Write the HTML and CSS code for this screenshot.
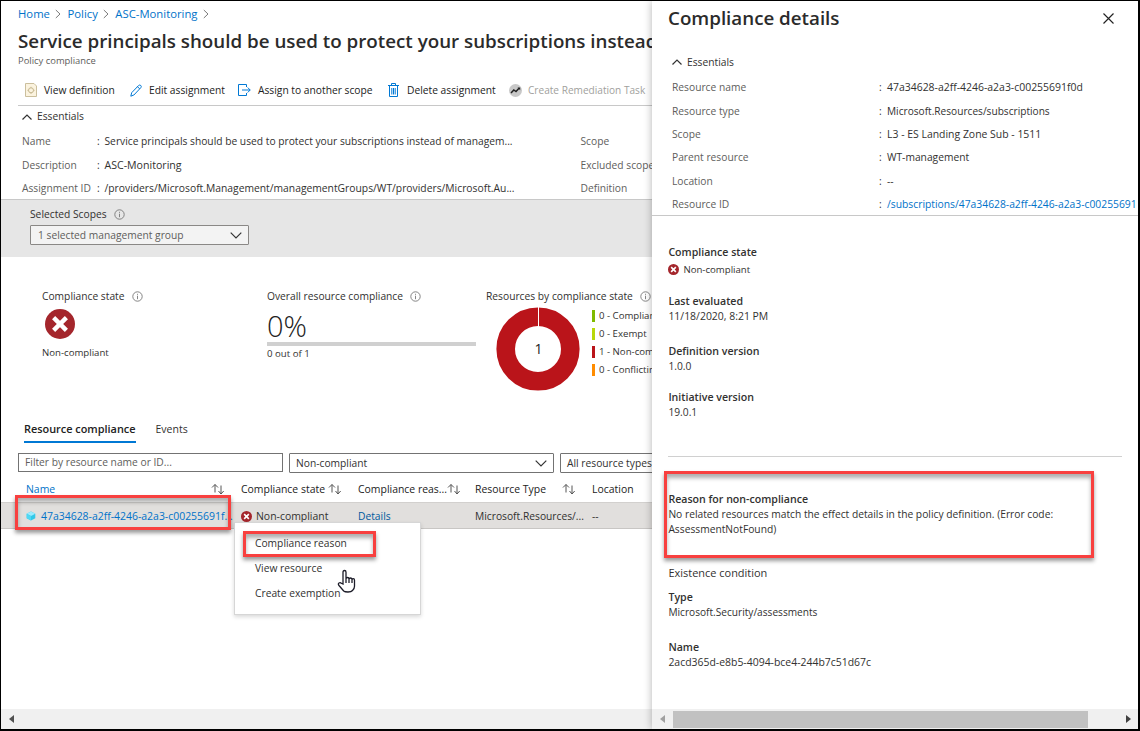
FILE: index.html
```
<!DOCTYPE html>
<html lang="en">
<head>
<meta charset="utf-8">
<title>Compliance details</title>
<link rel="stylesheet" href="styles.css">
</head>
<body>
<svg class="defs" width="0" height="0">
  <symbol id="chev-r" viewBox="0 0 6 10"><path d="M.8 1 5 5 .8 9" fill="none" stroke="#7a7a7a"/></symbol>
  <symbol id="chev-u" viewBox="0 0 10 6"><path d="M.5 5.5 5 1l4.500 4.500" fill="none" stroke="#333" stroke-width="1.200"/></symbol>
  <symbol id="chev-d" viewBox="0 0 12 7"><path d="M.7.700 6 6 11.300.700" fill="none" stroke="#333" stroke-width="1.200"/></symbol>
  <symbol id="info" viewBox="0 0 11 11"><circle cx="5.500" cy="5.500" r="4.700" fill="none" stroke="#777" stroke-width=".9"/><path d="M5.500 4.700v3.500M5.500 2.800v1" stroke="#777" stroke-width=".9"/></symbol>
  <symbol id="fail" viewBox="0 0 30 30"><circle cx="15" cy="15" r="15" fill="#a4262c"/><path d="m8.600 8.600 12.800 12.800M21.400 8.600 8.600 21.400" stroke="#fff" stroke-width="4.400"/></symbol>
  <symbol id="sort" viewBox="0 0 14 12"><path d="M4 9.500V1.500M1 4.500l3-3 3 3M10 2.500V11M7.500 8l2.500 3 2.700-3" fill="none" stroke="#555"/></symbol>
</svg>
<div class="window">
  <main class="page">
    <nav class="crumbs">
      <a>Home</a><svg><use href="#chev-r"/></svg><a>Policy</a><svg><use href="#chev-r"/></svg><a>ASC-Monitoring</a><svg><use href="#chev-r"/></svg>
    </nav>
    <h1 class="title">Service principals should be used to protect your subscriptions instead</h1>
    <div class="subtitle">Policy compliance</div>
    <div class="toolbar">
      <span class="tool tool-view"><svg width="12" height="14" viewBox="0 0 12 14"><path d="M.5.500h8.500l2.500 2.500v10.500H.5z" fill="#fbf3df" stroke="#cbbf9d"/><circle cx="6" cy="7.300" r="2.500" fill="none" stroke="#c5b78f"/><path d="M6 3.800v1M6 9.800v1M2.500 7.300h1M8.500 7.300h1" stroke="#c5b78f"/></svg>View definition</span>
      <span class="tool tool-edit"><svg width="12" height="13" viewBox="0 0 12 13"><path d="m.8 12.200.900-3.500L8.600 1.500q1.100-1 2.200 0 1 1.100 0 2.200L3.900 11zM7.500 2.700l2.200 2.200" fill="none" stroke="#0078d4"/></svg>Edit assignment</span>
      <span class="tool tool-assign"><svg width="13" height="12" viewBox="0 0 13 12"><path d="M8.500 3V.500h-8v11h8V9M4 6h8.200M9.700 3.500 12.200 6 9.700 8.500" fill="none" stroke="#0078d4"/></svg>Assign to another scope</span>
      <span class="tool tool-delete"><svg width="11" height="14" viewBox="0 0 11 14"><path d="M0 2.500h11M3.500 2.500v-2h4v2M1.500 2.500v11h8v-11M3.800 5v6.500M5.500 5v6.500M7.200 5v6.500" fill="none" stroke="#0078d4"/></svg>Delete assignment</span>
      <span class="tool tool-task"><svg width="13" height="13" viewBox="0 0 13 13"><circle cx="6.500" cy="6.500" r="6.500" fill="#c8c8c8"/><path d="m2 9 2.800-3 2.200 1.500 3-3.300" fill="none" stroke="#222" stroke-width="1.500"/><path d="M8.500 3.500h2.700v2.800z" fill="#222"/></svg>Create Remediation Task</span>
    </div>
    <div class="essentials-toggle"><svg><use href="#chev-u"/></svg>Essentials</div>
    <div class="facts">
      <span>Name</span><b>:</b><p>Service principals should be used to protect your subscriptions instead of managem...</p><span>Scope</span>
      <span>Description</span><b>:</b><p class="value-short">ASC-Monitoring</p><span>Excluded scope</span>
      <span>Assignment ID</span><b>:</b><p class="value-id">/providers/Microsoft.Management/managementGroups/WT/providers/Microsoft.Au...</p><span>Definition</span>
    </div>
    <section class="scopes">
      <div class="scopes-label">Selected Scopes<svg class="info"><use href="#info"/></svg></div>
      <div class="select scope-select">1 selected management group<svg><use href="#chev-d"/></svg></div>
    </section>
    <section class="stats">
      <div class="stat">
        <div class="stat-label">Compliance state<svg class="info"><use href="#info"/></svg></div>
        <svg class="fail-lg"><use href="#fail"/></svg>
        <div class="small">Non-compliant</div>
      </div>
      <div class="stat">
        <div class="stat-label">Overall resource compliance<svg class="info"><use href="#info"/></svg></div>
        <div class="percent">0%</div>
        <div class="bar"></div>
        <div class="small bar-note">0 out of 1</div>
      </div>
      <div class="stat">
        <div class="stat-label">Resources by compliance state<svg class="info"><use href="#info"/></svg></div>
        <div class="chart">
          <svg width="84" height="84" viewBox="0 0 84 84"><circle cx="42" cy="42" r="32.300" fill="none" stroke="#ba141a" stroke-width="18.600"/><path d="M42.500 0v24" stroke="#fff"/><text x="42.500" y="46.500" text-anchor="middle" class="donut-num">1</text></svg>
          <ul class="legend small">
            <li class="ok">0 - Compliant</li><li class="exempt">0 - Exempt</li><li class="bad">1 - Non-compliant</li><li class="conflict">0 - Conflicting</li>
          </ul>
        </div>
      </div>
    </section>
    <div class="tabs"><span class="tab active">Resource compliance</span><span class="tab">Events</span></div>
    <div class="filters">
      <div class="search">Filter by resource name or ID...</div>
      <div class="select">Non-compliant<svg><use href="#chev-d"/></svg></div>
      <div class="select">All resource types</div>
    </div>
    <div class="grid head">
      <span class="link">Name<svg><use href="#sort"/></svg></span><span>Compliance state<svg><use href="#sort"/></svg></span><span>Compliance reas...<svg><use href="#sort"/></svg></span><span>Resource Type<svg><use href="#sort"/></svg></span><span>Location</span>
    </div>
    <div class="grid row">
      <span class="link guid"><svg class="cube" viewBox="0 0 10 10"><path d="m5 .5 4.300 2.200v4.600L5 9.500.700 7.300V2.700z" fill="#32c8e8"/><path d="m5 .5 4.300 2.200L5 5 .7 2.700z" fill="#9cebff"/><path d="M.7 2.700 5 5v4.500L.7 7.300z" fill="#50d8f4"/></svg>47a34628-a2ff-4246-a2a3-c00255691f...</span>
      <span class="state"><svg class="fail-sm"><use href="#fail"/></svg>Non-compliant</span>
      <span class="details">Details</span><span>Microsoft.Resources/...</span><span>--</span>
    </div>
    <div class="scrollbar"><i class="arrow left"></i></div>

    <div class="menu"><span>Compliance reason</span><span>View resource</span><span>Create exemption</span></div>
    <div class="callout callout-row"></div>
    <div class="callout callout-menu"></div>
    <svg class="cursor" width="20" height="25" viewBox="0 0 20 25"><path d="M6 15V3.300q0-1.800 1.500-1.800T9 3.300V10q0-1.500 1.500-1.500T12 10q.2-1 1.500-1t1.500 1.500q.2-.8 1.300-.8 1.200 0 1.200 1.500v6q0 2.500-2 4.300-1.200 1.500-4.500 1.500T6.700 22L2 16.500q-1.300-1.600 0-2.500t2.300.3zM9 10v4M12 10v4M15 10.500V14" fill="#fff" stroke="#1c1c28" stroke-width="1.300"/></svg>
  </main>

  <aside class="panel">
    <header class="panel-head"><h2>Compliance details</h2><svg width="11" height="11" viewBox="0 0 11 11"><path d="m.5.500 10 10M10.500.500l-10 10" stroke="#222" stroke-width="1.150"/></svg></header>
    <div class="panel-toggle"><svg><use href="#chev-u"/></svg>Essentials</div>
    <div class="panel-facts">
      <span>Resource name</span><b>:</b><p class="guid">47a34628-a2ff-4246-a2a3-c00255691f0d</p>
      <span>Resource type</span><b>:</b><p class="value-type">Microsoft.Resources/subscriptions</p>
      <span>Scope</span><b>:</b><p class="guid">L3 - ES Landing Zone Sub - 1511</p>
      <span>Parent resource</span><b>:</b><p>WT-management</p>
      <span>Location</span><b>:</b><p>--</p>
      <span>Resource ID</span><b>:</b><p class="link value-id">/subscriptions/47a34628-a2ff-4246-a2a3-c00255691</p>
    </div>
    <div class="panel-body">
      <dl class="field f-state"><dt>Compliance state</dt><dd class="small"><svg class="fail-sm"><use href="#fail"/></svg>Non-compliant</dd></dl>
      <dl class="field f-date"><dt>Last evaluated</dt><dd class="guid">11/18/2020, 8:21 PM</dd></dl>
      <dl class="field f-def"><dt>Definition version</dt><dd>1.0.0</dd></dl>
      <dl class="field f-init"><dt>Initiative version</dt><dd>19.0.1</dd></dl>
      <dl class="field f-reason"><dt>Reason for non-compliance</dt><dd>No related resources match the effect details in the policy definition. (Error code: AssessmentNotFound)</dd></dl>
      <h3>Existence condition</h3>
      <dl class="field f-type"><dt>Type</dt><dd class="value-type">Microsoft.Security/assessments</dd></dl>
      <dl class="field f-name"><dt>Name</dt><dd class="guid">2acd365d-e8b5-4094-bce4-244b7c51d67c</dd></dl>
    </div>
    <div class="scrollbar"><i class="arrow left dim"></i><i class="thumb"></i><i class="arrow right"></i></div>
    <div class="callout callout-reason"></div>
  </aside>
</div>
</body>
</html>
```
FILE: styles.css
```
* { box-sizing: border-box; margin: 0; padding: 0; }
body {
  width: 1140px; height: 731px; overflow: hidden; background: #fff;
  font: 10.25px/15px "Open Sans", "Noto Sans", sans-serif; color: #323130; white-space: nowrap;
}
svg { display: block; flex: none; }
.defs { position: absolute; }
.window {
  display: flex; width: 1140px; height: 731px;
  border: 1px solid #000; border-right-width: 2px; border-bottom-width: 2px;
}
.page { position: relative; width: 651px; height: 728px; overflow: hidden; display: flex; flex-direction: column; }
.page > * { flex: none; }
.link, .crumbs a { color: #0072c9; }
.small { font-size: 9.65px; }
.guid { font-size: 10.45px; }
.value-short { font-size: 10.6px; }
.value-id { font-size: 10.32px; }
.value-type { font-size: 10.13px; }

.crumbs { display: flex; align-items: center; height: 26px; padding: 0 0 1px 17px; font-size: 11.3px; }
.crumbs svg { width: 6px; height: 10px; margin: 0 6px 0 5.5px; }
.title { height: 28px; padding-left: 17px; font-size: 18.78px; line-height: 28px; font-weight: 600; color: #2b2b2b; }
.subtitle { height: 18px; padding-left: 17px; font-size: 9.42px; line-height: 12px; color: #605e5c; }
.toolbar { display: flex; height: 33px; margin-left: 17px; border-bottom: 1px solid #c8c8c8; }
.tool { display: flex; align-items: center; height: 34px; color: #222; }
.tool-view { width: 112px; padding-left: 7px; gap: 7px; }
.tool-edit { width: 108px; gap: 7px; }
.tool-assign { width: 150px; gap: 7px; }
.tool-delete { width: 121px; gap: 8px; }
.tool-task { gap: 6px; font-size: 10.1px; color: #a19f9d; }

.essentials-toggle, .panel-toggle { display: flex; align-items: center; gap: 5px; }
.essentials-toggle { height: 21px; padding-left: 21px; }
.essentials-toggle svg, .panel-toggle svg { width: 10px; height: 6px; }
.facts {
  display: grid; grid-template: 24px 24px 23px / 75px 7.5px 476px auto; align-items: center;
  height: 73px; padding: 2px 0 0 21px;
}
.facts span, .panel-facts span { color: #605e5c; }
.facts b, .panel-facts b { font-weight: 400; }

.scopes { height: 58px; margin-top: -1px; padding: 7px 0 0 29px; background: #e6e6e6; border-top: 1px solid #c8c8c8; }
.info { width: 11px; height: 11px; }
.scopes-label, .stat-label { display: flex; align-items: center; gap: 7px; height: 15px; }
.select { display: flex; align-items: center; justify-content: space-between; border: 1px solid #737373; border-radius: 1px; background: #fff; padding: 0 6px; }
.select svg { width: 12px; height: 7px; }
.scope-select { width: 219px; height: 20px; margin-top: 3px; padding-left: 7px; border-color: #8a8886; background: #f3f3f3; color: #605e5c; }

.stats { display: grid; grid-template-columns: 225px 219px auto; height: 160px; padding: 32px 0 0 41px; }
.fail-lg { width: 30px; height: 30px; margin: 5px 0 6px 3px; }
.percent { height: 31px; font-size: 29px; line-height: 44px; font-weight: 300; color: #222; }
.bar { width: 209px; height: 4px; margin-top: 7px; background: #d0d0d0; }
.bar-note { line-height: 15px; }
.chart { display: flex; padding-left: 10px; margin-top: 3px; }
.donut-num { font-size: 14px; fill: #222; }
.legend { list-style: none; padding: 3px 0 0 12px; display: grid; grid-auto-rows: 12px; gap: 6px; line-height: 12px; }
.legend li { padding-left: 4px; border-left: 3px solid; }
.ok { border-color: #7fba00 !important; }
.exempt { border-color: #b8d80a !important; }
.bad { border-color: #ba141a !important; }
.conflict { border-color: #ff8c00 !important; }

.tabs { display: flex; gap: 20px; height: 36px; padding-left: 23px; line-height: 24px; }
.tab { height: 26px; font-size: 10.5px; }
.tab.active { font-size: 10.9px; font-weight: 600; color: #222; border-bottom: 2px solid #0078d4; }
.filters { display: grid; grid-template-columns: 265px 265px 265px; gap: 6px; height: 23px; padding-left: 17px; }
.search { height: 19px; padding-left: 6px; border: 1px solid #737373; line-height: 17px; color: #605e5c; }
.filters .select { height: 20px; padding-top: 1px; }
.grid { display: grid; grid-template-columns: 215px 117px 117px 117px auto; padding-left: 25px; }
.grid span { display: flex; align-items: center; }
.head { height: 26px; }
.head span { justify-content: space-between; padding-right: 16px; font-size: 10.45px; color: #222; }
.head .link { color: #0072c9; }
.head span:first-child { padding-right: 16px; }
.head svg { width: 14px; height: 12px; }
.row { height: 27px; padding-top: 1px; background: #e1dfdd; border-bottom: 1px solid #c8c6c4; border-top: 1px solid #d2d0ce; }
.cube { width: 10px; height: 10px; margin-right: 5px; }
.fail-sm { width: 11px; height: 11px; margin-right: 4px; }
.state { font-size: 10.45px; }
.details { color: #005a9e; }

.scrollbar { display: flex; align-items: center; height: 20px; margin-top: auto; background: #f0f0f0; }
.arrow { width: 0; height: 0; border: 4.5px solid transparent; }
.arrow.left { border-left: 0; border-right: 5px solid #505050; margin-left: 8px; }
.arrow.right { border-right: 0; border-left: 5px solid #404040; margin: 0 7px 0 auto; }
.arrow.dim { border-right-color: #a0a0a0; }
.thumb { width: 415px; height: 17px; margin-left: 8px; background: #c1c1c1; }

.menu {
  position: absolute; left: 233px; top: 521px; width: 187px; height: 93px; padding: 8px 20px;
  background: #fff; border: 1px solid #d6d6d6; box-shadow: 0 2px 4px rgba(0,0,0,.15);
}
.menu span { display: block; height: 25px; line-height: 25px; }
.callout { position: absolute; border: 3px solid #f8403f; box-shadow: 0 3px 4px rgba(0,0,0,.4), inset 0 4px 4px rgba(0,0,0,.32); }
.callout-row { left: 14px; top: 494px; width: 216px; height: 35px; }
.callout-menu { left: 242px; top: 530px; width: 133px; height: 26px; }
.callout-reason { left: 12px; top: 470px; width: 430px; height: 87px; }
.cursor { position: absolute; left: 336px; top: 568px; }

.panel { position: relative; z-index: 1; display: flex; flex-direction: column; width: 486px; height: 728px; background: #fff; box-shadow: 0 0 8px rgba(0,0,0,.3); }
.panel-head { display: flex; justify-content: space-between; align-items: center; height: 34px; padding: 0 24px 0 16px; }
.panel-head h2 { font-size: 18.75px; line-height: 28px; font-weight: 600; color: #2b2b2b; }
.panel-toggle { height: 40px; padding: 14px 0 0 20px; }
.panel-facts { display: grid; grid-template: repeat(6, 23.4px) / 207px 8px auto; align-items: center; height: 141px; padding: 1px 0 0 20px; border-bottom: 1px solid #c8c8c8; }
.panel-body { flex: 1; width: 470px; padding: 29px 0 0 16.4px; white-space: normal; }
.field dt { font-size: 10.6px; font-weight: 600; }
.field .small { display: flex; align-items: center; }
.f-state { height: 49px; }
.f-state dd { height: 19px; }
.f-date { height: 50px; }
.f-def { height: 46px; }
.f-init { height: 67px; border-bottom: 1px solid #d0d0d0; }
.f-reason { height: 108px; padding-top: 35px; }
.f-reason dd { width: 400px; }
.panel-body h3 { height: 25px; font-size: 10.97px; font-weight: 400; }
.f-type { height: 50px; }
```
